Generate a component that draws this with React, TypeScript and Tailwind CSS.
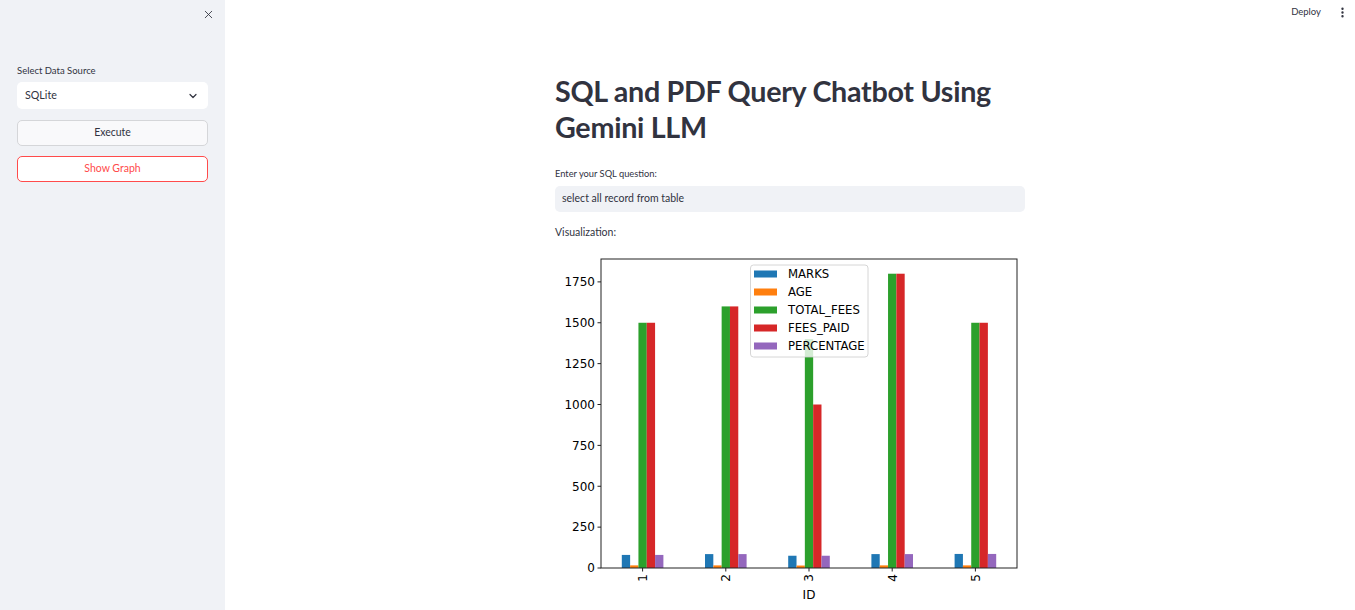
import React from 'react';
import { X, ChevronDown, EllipsisVertical } from 'lucide-react';

const COLORS = ['#1f77b4', '#ff7f0e', '#2ca02c', '#d62728', '#9467bd'];
const SERIES = ['MARKS', 'AGE', 'TOTAL_FEES', 'FEES_PAID', 'PERCENTAGE'];

// rows = ID 1..5, columns = series
const DATA = [
  [80, 16, 1500, 1500, 80],
  [85, 16, 1600, 1600, 85],
  [75, 15, 1400, 1000, 75],
  [85, 16, 1800, 1800, 85],
  [86, 16, 1500, 1500, 86],
];

const AX_L = 46;
const AX_R = 462;
const AX_T = 9;
const AX_B = 318;
const YS = (AX_B - AX_T) / 1890;
const XS = (AX_R - AX_L) / 5;
const BW = XS * 0.1;

const y = (v: number) => AX_B - v * YS;

const BarChart: React.FC = () => {
  const font = '"DejaVu Sans", sans-serif';
  return (
    <svg width={470} height={360} className="block">
      {DATA.map((row, i) => {
        const cx = AX_L + XS * (i + 0.5);
        return row.map((v, k) => (
          <rect
            key={`${i}-${k}`}
            x={cx + (k - 2) * BW - BW / 2}
            y={y(v)}
            width={BW}
            height={v * YS}
            fill={COLORS[k]}
          />
        ));
      })}

      {/* legend */}
      <rect x={195.5} y={15} width={117.5} height={92} rx={3} fill="white" fillOpacity={0.8} stroke="#cccccc" strokeWidth={0.8} />
      {SERIES.map((s, k) => (
        <g key={s}>
          <rect x={199} y={20.5 + k * 18} width={23} height={7} fill={COLORS[k]} />
          <text x={233} y={28.3 + k * 18} fontSize={11.7} fontFamily={font} fill="#000">
            {s}
          </text>
        </g>
      ))}

      {/* axes */}
      <rect x={AX_L} y={AX_T} width={AX_R - AX_L} height={AX_B - AX_T} fill="none" stroke="#222" strokeWidth={1} />
      {[0, 250, 500, 750, 1000, 1250, 1500, 1750].map((t) => (
        <g key={t}>
          <line x1={AX_L - 3.5} x2={AX_L} y1={y(t)} y2={y(t)} stroke="#222" strokeWidth={1} />
          <text x={AX_L - 6} y={y(t) + 4.3} fontSize={12} fontFamily={font} textAnchor="end" fill="#000">
            {t}
          </text>
        </g>
      ))}
      {DATA.map((_, i) => {
        const cx = AX_L + XS * (i + 0.5);
        return (
          <g key={i}>
            <line x1={cx} x2={cx} y1={AX_B} y2={AX_B + 3.5} stroke="#222" strokeWidth={1} />
            <text
              transform={`translate(${cx + 4.3},${AX_B + 6}) rotate(-90)`}
              fontSize={12}
              fontFamily={font}
              textAnchor="end"
              fill="#000"
            >
              {i + 1}
            </text>
          </g>
        );
      })}
      <text x={(AX_L + AX_R) / 2} y={349} fontSize={12} fontFamily={font} textAnchor="middle" fill="#000">
        ID
      </text>
    </svg>
  );
};

const App: React.FC = () => {
  return (
    <div className="flex h-screen w-full overflow-hidden bg-white text-[#31333f] font-['Lato',sans-serif]">
      <aside className="w-[225px] shrink-0 h-full bg-[#f0f2f6] px-[17px] flex flex-col">
        <div className="flex justify-end pt-[8px] mr-[-7px]">
          <X size={13} strokeWidth={1.6} className="text-[#31333f]" />
        </div>
        <label className="mt-[43px] text-[9.5px] leading-[14px] text-[#31333f]">Select Data Source</label>
        <div className="mt-[4px] h-[27px] bg-white rounded-[5px] flex items-center justify-between pl-[8px] pr-[9px] text-[10.7px]">
          <span>SQLite</span>
          <ChevronDown size={12} strokeWidth={2.4} />
        </div>
        <button className="mt-[11px] h-[26px] rounded-[5px] border border-[#d5d6d9] bg-[#f9f9fb] text-[10.5px] text-[#31333f]">
          Execute
        </button>
        <button className="mt-[10px] h-[26px] rounded-[5px] border border-[#ff4b4b] bg-white text-[10.5px] text-[#ff4b4b]">
          Show Graph
        </button>
      </aside>

      <main className="flex-1 flex flex-col min-w-0">
        <div className="h-[26px] flex items-center justify-end gap-[15px] pr-[6px] pt-[1px]">
          <span className="text-[9.5px] text-[#31333f]">Deploy</span>
          <EllipsisVertical size={13} strokeWidth={2.4} className="text-[#31333f]" />
        </div>
        <div className="w-[470px] mx-auto flex flex-col">
          <h1 className="mt-[50px] text-[28.7px] leading-[36px] font-bold tracking-[-0.01em] text-[#31333f]">
            SQL and PDF Query Chatbot Using Gemini LLM
          </h1>
          <label className="mt-[22px] text-[9.3px] leading-[14px]">Enter your SQL question:</label>
          <div className="mt-[5px] h-[26px] rounded-[5px] bg-[#f0f2f6] flex items-center px-[7px] text-[10.5px]">
            select all record from table
          </div>
          <p className="mt-[13px] text-[10.5px] leading-[15px]">Visualization:</p>
          <div className="mt-[10px]">
            <BarChart />
          </div>
        </div>
      </main>
    </div>
  );
};

export default App;
